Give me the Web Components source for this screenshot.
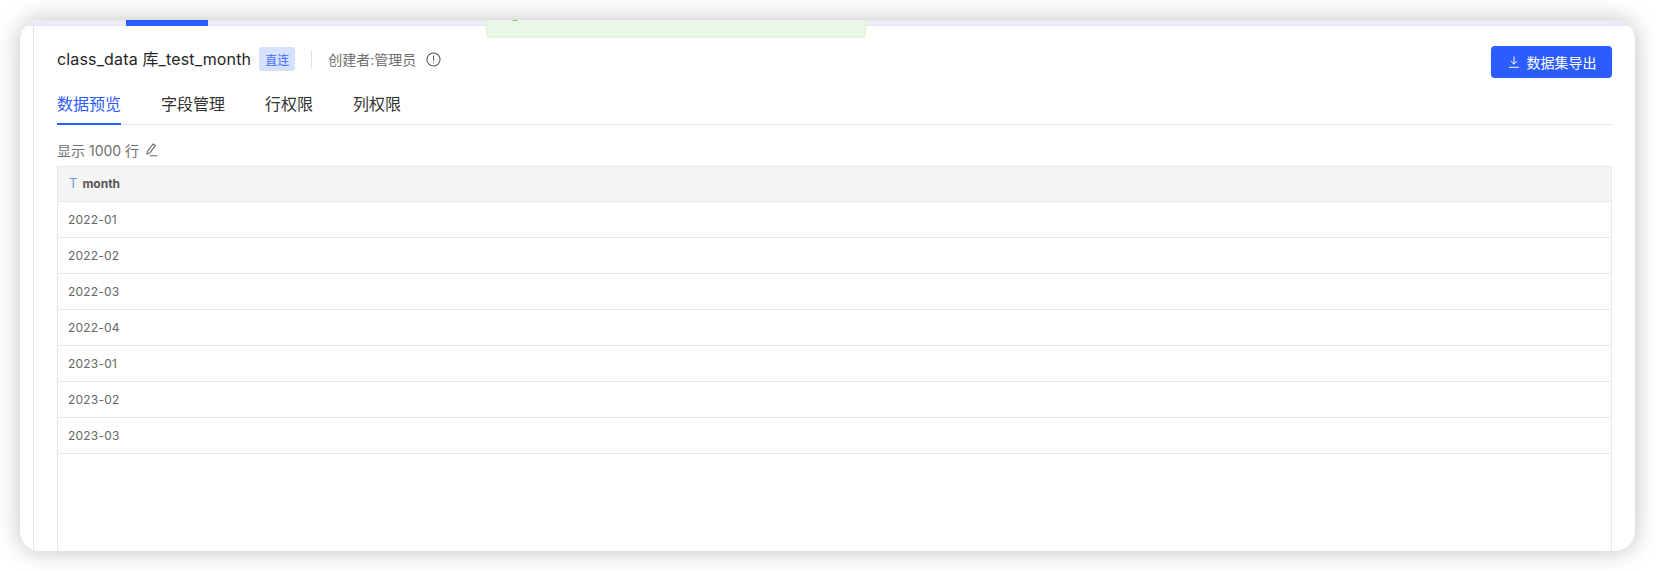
<!DOCTYPE html>
<html lang="zh">
<head>
<meta charset="utf-8">
<title>class_data</title>
<style>
  html, body { margin: 0; height: 100%; background: #fff; overflow: hidden; }
  body { font-family: Inter, "Noto Sans CJK SC", sans-serif; color: #333; }
</style>
</head>
<body>
<template id="app-window-tpl">
  <style>
    :host { display: block; width: 1615px; height: 531px; margin: 20px 0 0 20px; position: relative;
      border-radius: 20px; box-shadow: 0 0 24px rgba(0,0,0,.25); background: #fff; }
    .clip { height: 100%; border-radius: 20px; overflow: hidden; display: flex; flex-direction: column; position: relative; }
    .strip { height: 6px; flex: none; background: #e9ecf4; border-bottom: 1px solid #e3e6ee; padding-left: 106px; box-sizing: border-box; }
    .strip i { display: block; width: 82px; height: 6px; background: #2b5cff; }
    .body { flex: 1; min-height: 0; margin-left: 13px; border-left: 1px solid #e8e8e8; padding: 20px 23px 0 23px; }
  </style>
  <div class="clip">
    <div class="strip"><i></i></div>
    <div class="body"><slot></slot></div>
    <slot name="overlay"></slot>
  </div>
</template>

<template id="toast-bar-tpl">
  <style>
    :host { display: block; position: absolute; left: 466px; top: -20px; width: 380px; height: 38px; box-sizing: border-box;
      background: #ebf7e6; border: 1px solid #dcf0d2; border-radius: 4px; }
    i { position: absolute; left: 22px; top: 8px; width: 12px; height: 12px; border-radius: 50%; background: #67c23a; }
    span { position: absolute; left: 47px; top: 5px; font-size: 13px; line-height: 13px; color: #a5d98c; white-space: nowrap; }
  </style>
  <i></i><span><slot></slot></span>
</template>

<template id="dataset-head-tpl">
  <style>
    :host { display: block; }
    .row { display: flex; align-items: flex-start; height: 32px; }
    .left { display: flex; align-items: center; height: 26px; }
    .title { font-size: 16px; color: #262626; line-height: 24px; letter-spacing: .15px; }
    .badge { margin-left: 8px; width: 36px; height: 24px; border-radius: 3px; background: #d6e0ff; color: #3f6cff;
      font-size: 12px; display: flex; align-items: center; justify-content: center; }
    .sep { width: 1px; height: 18px; background: #e0e0e0; margin: 0 16px; }
    .meta { font-size: 14px; color: #6e6e6e; }
    .info { margin-left: 10px; width: 15px; height: 15px; display: block; }
    .export { margin-left: auto; width: 121px; height: 32px; border: 0; border-radius: 4px; background: #2b5cff; color: #fff;
      font: 14px Inter, "Noto Sans CJK SC", sans-serif; display: flex; align-items: center; justify-content: center; gap: 6px; padding: 0; }
    .export svg { width: 14px; height: 14px; display: block; }
  </style>
  <div class="row">
    <div class="left">
      <span class="title"><slot name="title"></slot></span>
      <span class="badge"><slot name="badge"></slot></span>
      <span class="sep"></span>
      <span class="meta"><slot name="meta"></slot></span>
      <svg class="info" viewBox="0 0 16 16" fill="none" stroke="#555" stroke-width="1.1">
        <circle cx="8" cy="8" r="7"></circle>
        <path d="M8 3.8v5.6M8 10.8v1.3"></path>
      </svg>
    </div>
    <button class="export">
      <svg viewBox="0 0 14 14" fill="none" stroke="#fff" stroke-width="1">
        <path d="M7 1.5v7.5M3.8 6l3.2 3.2L10.2 6M2 12.3h10"></path>
      </svg>
      <slot name="action"></slot>
    </button>
  </div>
</template>

<template id="tab-bar-tpl">
  <style>
    :host { display: flex; gap: 40px; height: 38px; box-sizing: border-box; border-bottom: 1px solid #e3e5ea; margin-top: 9px; }
  </style>
  <slot></slot>
</template>

<template id="tab-item-tpl">
  <style>
    :host { display: block; height: 38px; box-sizing: border-box; font-size: 16px; line-height: 34px; color: #333; }
    :host([active]) { color: #2b5cff; border-bottom: 2px solid #2b5cff; }
  </style>
  <slot></slot>
</template>

<template id="row-limit-tpl">
  <style>
    :host { display: flex; align-items: center; gap: 5px; font-size: 14px; color: #6e6e6e; height: 20px; margin: 15px 0 6px; }
    svg { width: 14px; height: 14px; display: block; }
  </style>
  <slot></slot>
  <svg viewBox="0 0 14 14" fill="none" stroke="#666" stroke-width="1.1">
    <path d="M9.2 1l2.2 1.7-5.6 7.2-2.7 1.2.4-2.9zM5.8 12.8h7.4"></path>
  </svg>
</template>

<template id="data-table-tpl">
  <style>
    :host { display: block; height: 396px; box-sizing: border-box; border: 1px solid #e8e8e8; border-bottom: 0; }
    .head { height: 35px; box-sizing: border-box; background: #f5f5f5; border-bottom: 1px solid #e8e8e8; display: flex; align-items: center;
      padding: 0 0 2px 11px; gap: 5px; font-size: 12px; font-weight: 700; color: #555; }
    .head b { font-weight: 400; font-size: 13px; color: #6f8fe0; }
  </style>
  <div class="head"><b>T</b><slot name="head"></slot></div>
  <slot></slot>
</template>

<template id="data-row-tpl">
  <style>
    :host { display: block; height: 36px; box-sizing: border-box; border-bottom: 1px solid #e8e8e8; padding-left: 10px;
      font-size: 12px; line-height: 35px; color: #666; letter-spacing: .2px; }
  </style>
  <slot></slot>
</template>

<app-window>
  <toast-bar slot="overlay">操作成功</toast-bar>
  <dataset-head>
    <span slot="title">class_data 库_test_month</span>
    <span slot="badge">直连</span>
    <span slot="meta">创建者:管理员</span>
    <span slot="action">数据集导出</span>
  </dataset-head>
  <tab-bar>
    <tab-item active>数据预览</tab-item>
    <tab-item>字段管理</tab-item>
    <tab-item>行权限</tab-item>
    <tab-item>列权限</tab-item>
  </tab-bar>
  <row-limit>显示 1000 行</row-limit>
  <data-table>
    <span slot="head">month</span>
    <data-row>2022-01</data-row>
    <data-row>2022-02</data-row>
    <data-row>2022-03</data-row>
    <data-row>2022-04</data-row>
    <data-row>2023-01</data-row>
    <data-row>2023-02</data-row>
    <data-row>2023-03</data-row>
  </data-table>
</app-window>

<script>
  // each tag just stamps its template into an open shadow root
  for (const tag of ["app-window", "toast-bar", "dataset-head", "tab-bar", "tab-item", "row-limit", "data-table", "data-row"]) {
    customElements.define(tag, class extends HTMLElement {
      constructor() {
        super();
        this.attachShadow({ mode: "open" });
        this.shadowRoot.appendChild(document.getElementById(tag + "-tpl").content.cloneNode(true));
      }
    });
  }
</script>
</body>
</html>
